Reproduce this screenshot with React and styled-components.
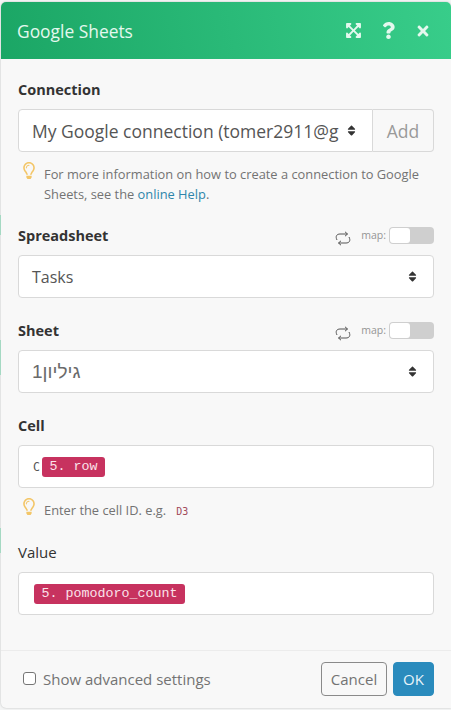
import React from 'react';
import styled, { createGlobalStyle } from 'styled-components';
import { FaExpandArrowsAlt, FaQuestion, FaTimes, FaRegLightbulb, FaSort } from 'react-icons/fa';

const GlobalStyle = createGlobalStyle`
    html, body {
        margin: 0;
        background: #f4f5f5;
    }
    body {
        font-family: "Open Sans", "Noto Sans", sans-serif;
        color: #333;
    }
`;

const Page = styled.div`
    position: relative;
    width: 451px;
    height: 710px;
    padding: 2px 0 2px 1px;
    box-sizing: border-box;
    overflow: hidden;
`;

// bits of the scenario canvas that peek out beside the modal
const CanvasMark = styled.span`
    position: absolute;
    left: 0;
    top: ${p => p.$top}px;
    width: 1px;
    height: ${p => p.$height}px;
    background: #a5d9c3;
`;

const Modal = styled.div`
    height: 100%;
    background: #f8f8f8;
    border-radius: 5px 5px 0 5px;
    display: flex;
    flex-direction: column;
    box-shadow: 0 0 2px rgba(0, 0, 0, 0.25);
`;

const Header = styled.header`
    height: 57px;
    flex: none;
    box-sizing: border-box;
    padding: 0 20px 0 16px;
    display: flex;
    align-items: center;
    color: #e4f8ee;
    border-radius: 5px 5px 0 0;
    background: linear-gradient(80deg, #1ba665 0%, #38cd8a 100%);
`;

const Title = styled.h1`
    margin: 0 auto 0 0;
    font-size: 17.4px;
    font-weight: 400;
`;

const HeaderIcons = styled.div`
    display: flex;
    align-items: center;
    gap: 18px;
    font-size: 16px;
    svg { display: block; }
    svg:first-child {
        font-size: 17px;
    }
    svg:nth-child(2) {
        font-size: 17px;
    }
`;

const Body = styled.div`
    flex: 1;
    padding: 20px 17px 0 17px;
    display: flex;
    flex-direction: column;
`;

const Field = styled.section`
    margin-bottom: ${p => p.$gap || 22}px;
`;

const LabelRow = styled.div`
    height: 20px;
    margin-bottom: 10px;
    display: flex;
    align-items: center;
    justify-content: space-between;
`;

const Label = styled.label`
    font-size: ${p => (p.$plain ? 15 : 14.5)}px;
    font-weight: ${p => (p.$plain ? 400 : 700)};
    color: #333;
`;

const MapControl = styled.div`
    display: flex;
    align-items: center;
    color: #959595;
    font-size: 10.5px;
`;

const LoopIcon = styled.svg`
    width: 16px;
    height: 15px;
    margin: 7px 10px 0 0;
`;

const Toggle = styled.span`
    width: 45px;
    height: 17px;
    margin-left: 3px;
    background: #cfcfcf;
    border-radius: 4px;
    display: flex;
    padding: 1px;
    box-sizing: border-box;
    &::before {
        content: "";
        width: 20px;
        background: #fff;
        border-radius: 3px;
    }
`;

const Control = styled.div`
    height: 43px;
    box-sizing: border-box;
    background: #fff;
    border: 1px solid #d9d9d9;
    border-radius: 4px;
    display: flex;
    align-items: center;
    padding: 0 14px 0 13px;
    font-size: 16px;
    color: #555;
`;

const ConnectionGroup = styled.div`
    display: flex;
    height: 43px;
`;

const ConnectionSelect = styled(Control)`
    flex: 1;
    min-width: 0;
    border-radius: 4px 0 0 4px;
`;

const ClippedText = styled.span`
    flex: 1;
    min-width: 0;
    overflow: hidden;
    white-space: nowrap;
    font-size: 17.5px;
`;

const AddButton = styled.div`
    width: 61px;
    box-sizing: border-box;
    border: 1px solid #d9d9d9;
    border-left: 0;
    border-radius: 0 4px 4px 0;
    display: flex;
    align-items: center;
    justify-content: center;
    font-size: 17.5px;
    color: #9a9a9a;
`;

const SelectText = styled.span`
    flex: 1;
    font-size: ${p => p.$size || 16}px;
    font-family: ${p => p.$font || 'inherit'};
    color: ${p => p.$color || 'inherit'};
`;

const SortIcon = styled(FaSort)`
    font-size: 13px;
    color: #333;
    margin-left: ${p => (p.$tight ? 6 : 0)}px;
    flex: none;
`;

const Hint = styled.div`
    margin-top: 12px;
    padding-left: 4px;
    display: flex;
    align-items: flex-start;
    font-size: 12.85px;
    line-height: 20px;
    color: #737373;
`;

const Bulb = styled(FaRegLightbulb)`
    flex: none;
    width: 14px;
    height: 17px;
    margin: -2px 8px 0 0;
    color: #f3c668;
`;

const HelpLink = styled.a`
    color: #2e86ab;
    text-decoration: none;
`;

const CodeSample = styled.code`
    margin-left: 10px;
    font-family: "DejaVu Sans Mono", monospace;
    font-size: 10px;
    color: #a14a5a;
`;

const Prefix = styled.span`
    font-family: "DejaVu Sans Mono", monospace;
    font-size: 11.5px;
    color: #555;
    margin-left: 1px;
`;

const Pill = styled.span`
    height: 20px;
    margin-left: 2px;
    padding: 0 7.5px 1px;
    box-sizing: border-box;
    background: #c7325f;
    color: #fbe3ea;
    border-radius: 3px;
    display: flex;
    align-items: center;
    font-family: "Liberation Mono", monospace;
    font-size: 13.33px;
    white-space: nowrap;
`;

const Footer = styled.footer`
    height: 58px;
    box-sizing: border-box;
    flex: none;
    padding: 11px 17px 0 22px;
    border-top: 1px solid #ececec;
    display: flex;
    align-items: flex-start;
`;

const AdvancedLabel = styled.label`
    display: flex;
    align-items: center;
    gap: 7px;
    height: 34px;
    margin-right: auto;
    font-size: 15px;
    color: #737373;
`;

const CheckBox = styled.span`
    width: 13px;
    height: 13px;
    margin-top: -2px;
    box-sizing: border-box;
    background: #fff;
    border: 1px solid #767676;
    border-radius: 3px;
`;

const Button = styled.button`
    height: 34px;
    font-family: inherit;
    font-size: 15px;
    border-radius: 4px;
    padding: 0;
    width: ${p => (p.$primary ? 41 : 66)}px;
    margin-left: ${p => (p.$primary ? 6 : 0)}px;
    color: ${p => (p.$primary ? '#e8f4fa' : '#737373')};
    background: ${p => (p.$primary ? '#2a8bbd' : 'transparent')};
    border: 1px solid ${p => (p.$primary ? '#2a8bbd' : '#8a8a8a')};
`;

const Loop = () => (
    <LoopIcon viewBox="0 0 16 15" fill="none" stroke="#555" strokeWidth="1">
        <path d="M2 9 C0 5 2 3 5 3 H12.5 M10 0.8 L12.5 3 L10 5.2" />
        <path d="M14 6 C16 10 14 12 11 12 H3.5 M6 9.8 L3.5 12 L6 14.2" />
    </LoopIcon>
);

const MapSwitch = () => (
    <MapControl>
        <Loop />
        <span>map:</span>
        <Toggle />
    </MapControl>
);

export default function App() {
    return (
        <Page>
            <GlobalStyle />
            <Modal>
                <Header>
                    <Title>Google Sheets</Title>
                    <HeaderIcons>
                        <FaExpandArrowsAlt />
                        <FaQuestion />
                        <FaTimes />
                    </HeaderIcons>
                </Header>
                <Body>
                    <Field $gap={21}>
                        <LabelRow><Label>Connection</Label></LabelRow>
                        <ConnectionGroup>
                            <ConnectionSelect>
                                <ClippedText>My Google connection (tomer2911@gmail.com)</ClippedText>
                                <SortIcon $tight />
                            </ConnectionSelect>
                            <AddButton>Add</AddButton>
                        </ConnectionGroup>
                        <Hint>
                            <Bulb />
                            <span>
                                For more information on how to create a connection to Google Sheets, see the{' '}
                                <HelpLink>online Help</HelpLink>.
                            </span>
                        </Hint>
                    </Field>
                    <Field>
                        <LabelRow>
                            <Label>Spreadsheet</Label>
                            <MapSwitch />
                        </LabelRow>
                        <Control>
                            <SelectText>Tasks</SelectText>
                            <SortIcon />
                        </Control>
                    </Field>
                    <Field>
                        <LabelRow>
                            <Label>Sheet</Label>
                            <MapSwitch />
                        </LabelRow>
                        <Control>
                            <SelectText $size={19} $color="#6a6a6a" $font='"Liberation Sans", sans-serif'>גיליון1</SelectText>
                            <SortIcon />
                        </Control>
                    </Field>
                    <Field $gap={20}>
                        <LabelRow><Label>Cell</Label></LabelRow>
                        <Control>
                            <Prefix>C</Prefix>
                            <Pill>5. row</Pill>
                        </Control>
                        <Hint>
                            <Bulb />
                            <span>
                                Enter the cell ID. e.g.
                                <CodeSample>D3</CodeSample>
                            </span>
                        </Hint>
                    </Field>
                    <Field>
                        <LabelRow><Label $plain>Value</Label></LabelRow>
                        <Control>
                            <Pill>5. pomodoro_count</Pill>
                        </Control>
                    </Field>
                </Body>
                <Footer>
                    <AdvancedLabel>
                        <CheckBox />
                        Show advanced settings
                    </AdvancedLabel>
                    <Button>Cancel</Button>
                    <Button $primary>OK</Button>
                </Footer>
            </Modal>
            <CanvasMark $top={215} $height={20} />
            <CanvasMark $top={340} $height={35} />
            <CanvasMark $top={528} $height={25} />
        </Page>
    );
}
